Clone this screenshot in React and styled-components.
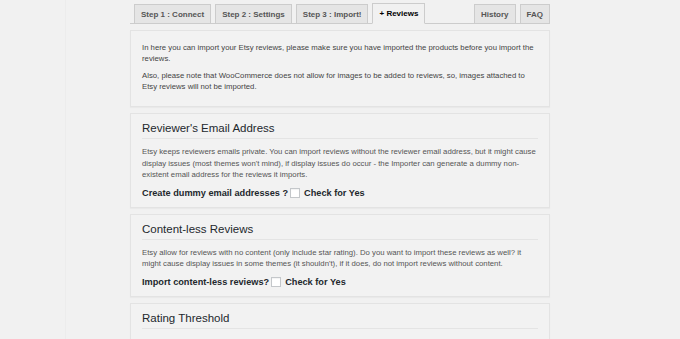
import React from 'react';
import styled, { createGlobalStyle } from 'styled-components';

const Global = createGlobalStyle`
  html, body {
    margin: 0;
    padding: 0;
    background: #f1f1f1;
    font-family: "Liberation Sans", Arial, sans-serif;
  }
`

const Page = styled.div`
  min-height: 339px;
  border-left: 1px solid #ececec;
  margin-left: 65px;
`

const Wrap = styled.div`
  width: 420px;
  margin-left: 64px;
`

const TabBar = styled.div`
  display: flex;
  align-items: flex-end;
  gap: 4px;
  padding: 4px 0 0 4px;
  height: 19px;
  border-bottom: 1px solid #cccccc;
`

const Tab = styled.div`
  box-sizing: border-box;
  height: ${props => props.active ? '21px' : '19px'};
  margin-bottom: ${props => props.active ? '-1px' : '0'};
  padding: 0 6px;
  display: flex;
  align-items: center;
  border: 1px solid #cccccc;
  border-bottom: ${props => props.active ? '1px solid #f1f1f1' : 'none'};
  background: ${props => props.active ? '#f1f1f1' : '#e5e5e5'};
  color: ${props => props.active ? '#000' : '#555'};
  font-size: 8px;
  font-weight: bold;
  white-space: nowrap;
  margin-left: ${props => props.push ? 'auto' : '0'};
`

const Panels = styled.div`
  display: flex;
  flex-direction: column;
  gap: 6px;
  margin-top: 6px;
`

const Panel = styled.div`
  border: 1px solid #e3e3e3;
  box-shadow: 0 1px 1px rgba(0, 0, 0, 0.03);
  background: #f2f2f2;
  padding: 6px 11px 7px;
`

const Intro = styled.p`
  margin: 6px 0 7px;
  font-size: 7.75px;
  line-height: 10.5px;
  color: #444;
`

const Heading = styled.h2`
  margin: 0;
  padding-bottom: 2px;
  border-bottom: 1px solid #e4e4e4;
  font-size: 11.5px;
  line-height: 16px;
  font-weight: normal;
  color: #23282d;
`

const Desc = styled.p`
  margin: 7px 0 5px;
  font-size: 7.75px;
  line-height: 11.5px;
  color: #555;
`

const OptionRow = styled.div`
  display: flex;
  align-items: center;
  font-size: 9.2px;
  line-height: 14px;
  font-weight: bold;
  color: #23282d;
`

const Box = styled.span`
  display: inline-block;
  box-sizing: border-box;
  width: 10px;
  height: 10px;
  margin: 0 4px 0 2px;
  background: #fff;
  border: 1px solid #c4c7ca;
  box-shadow: inset 0 1px 1px rgba(0, 0, 0, 0.05);
`

const tabs = ['Step 1 : Connect', 'Step 2 : Settings', 'Step 3 : Import!']

export default function App() {
  return (
    <Page>
      <Global />
      <Wrap>
        <TabBar>
          {tabs.map(t => <Tab key={t}>{t}</Tab>)}
          <Tab active>+ Reviews</Tab>
          <Tab push>History</Tab>
          <Tab>FAQ</Tab>
        </TabBar>

        <Panels>
          <Panel>
            <Intro>In here you can import your Etsy reviews, please make sure you have imported the products before you import the reviews.</Intro>
            <Intro>Also, please note that WooCommerce does not allow for images to be added to reviews, so, images attached to Etsy reviews will not be imported.</Intro>
          </Panel>

          <Panel>
            <Heading>Reviewer's Email Address</Heading>
            <Desc>Etsy keeps reviewers emails private. You can import reviews without the reviewer email address, but it might cause display issues (most themes won't mind), if display issues do occur - the Importer can generate a dummy non-existent email address for the reviews it imports.</Desc>
            <OptionRow>Create dummy email addresses ?<Box />Check for Yes</OptionRow>
          </Panel>

          <Panel>
            <Heading>Content-less Reviews</Heading>
            <Desc>Etsy allow for reviews with no content (only include star rating). Do you want to import these reviews as well? it might cause display issues in some themes (it shouldn't), if it does, do not import reviews without content.</Desc>
            <OptionRow>Import content-less reviews?<Box />Check for Yes</OptionRow>
          </Panel>

          <Panel>
            <Heading>Rating Threshold</Heading>
            <Desc>&nbsp;</Desc>
          </Panel>
        </Panels>
      </Wrap>
    </Page>
  )
}
